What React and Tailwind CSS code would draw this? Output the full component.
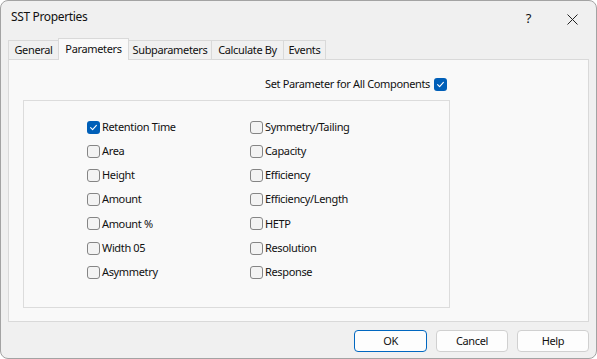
import React from "react";

const leftItems = [
  { label: "Retention Time", checked: true },
  { label: "Area" },
  { label: "Height" },
  { label: "Amount" },
  { label: "Amount %" },
  { label: "Width 05" },
  { label: "Asymmetry" },
];

const rightItems = [
  { label: "Symmetry/Tailing" },
  { label: "Capacity" },
  { label: "Efficiency" },
  { label: "Efficiency/Length" },
  { label: "HETP" },
  { label: "Resolution" },
  { label: "Response" },
];

const tabs = [
  { name: "General", w: "w-[51px]" },
  { name: "Parameters", w: "w-[71px]" },
  { name: "Subparameters", w: "w-[84px]" },
  { name: "Calculate By", w: "w-[73px]" },
  { name: "Events", w: "w-[43px]" },
];

function Checkbox({ checked }) {
  if (checked) {
    return (
      <span className="flex h-[13px] w-[13px] shrink-0 items-center justify-center rounded-[3px] bg-[#005fb8]">
        <svg width="9" height="9" viewBox="0 0 9 9" fill="none">
          <path d="M1.6 4.7 L3.6 6.6 L7.4 2.4" stroke="white" strokeWidth="1.1" strokeLinecap="round" strokeLinejoin="round" />
        </svg>
      </span>
    );
  }
  return <span className="h-[13px] w-[13px] shrink-0 rounded-[3px] border border-[#858585] bg-[#f3f3f3]" />;
}

function CheckItem({ label, checked }) {
  return (
    <div className="flex h-[24.2px] items-center gap-[2px]">
      <Checkbox checked={checked} />
      <span>{label}</span>
    </div>
  );
}

export default function App() {
  return (
    <div
      className="flex h-[359px] w-[597px] flex-col overflow-hidden rounded-[8px] border border-[#a3a3a3] bg-[#f0f0f0] text-[11px] tracking-[-0.35px] text-[#111]"
      style={{ fontFamily: '"Noto Sans", "Open Sans", sans-serif' }}
    >
      {/* title bar */}
      <div className="flex h-[36px] shrink-0 items-start justify-between pl-[10px] pr-[18px] pt-[7px]">
        <span className="text-[12px]">SST Properties</span>
        <div className="flex items-center gap-[36px] pt-[1px]">
          <span className="text-[13px]">?</span>
          <svg width="11" height="11" viewBox="0 0 11 11" className="mt-[1px]">
            <path d="M0.5 0.5 L10.5 10.5 M10.5 0.5 L0.5 10.5" stroke="#222" strokeWidth="1" />
          </svg>
        </div>
      </div>

      {/* tabs */}
      <div className="flex h-[22px] shrink-0 items-end pl-[7px]">
        {tabs.map((t) =>
          t.name === "Parameters" ? (
            <div
              key={t.name}
              className={`relative z-10 -mb-px -ml-px flex h-[22px] items-start justify-center border border-b-0 border-[#d9d9d9] bg-[#f9f9f9] pt-[2px] ${t.w}`}
            >
              {t.name}
            </div>
          ) : (
            <div
              key={t.name}
              className={`-ml-px flex h-[19px] items-center justify-center border border-b-0 border-[#d9d9d9] bg-[#f0f0f0] first:ml-0 ${t.w}`}
            >
              {t.name}
            </div>
          )
        )}
      </div>

      {/* panel */}
      <div className="ml-[7px] mr-[7px] flex h-[263px] shrink-0 flex-col border border-[#d9d9d9] bg-[#f9f9f9]">
        <div className="flex h-[40px] items-center justify-end gap-[4px] pr-[141px] pt-[8px]">
          <span>Set Parameter for All Components</span>
          <Checkbox checked />
        </div>
        <div className="ml-[14px] flex h-[208px] w-[427px] border border-[#dcdcdc] pl-[63px] pt-[14px]">
          <div className="w-[163px]">
            {leftItems.map((it) => (
              <CheckItem key={it.label} {...it} />
            ))}
          </div>
          <div>
            {rightItems.map((it) => (
              <CheckItem key={it.label} {...it} />
            ))}
          </div>
        </div>
      </div>

      {/* buttons */}
      <div className="flex flex-1 items-start justify-end gap-[9px] pr-[7px] pt-[8px]">
        <button className="h-[22px] w-[73px] rounded-[4px] border border-[#0067c0] bg-[#fdfdfd]">OK</button>
        <button className="h-[22px] w-[72px] rounded-[4px] border border-[#d0d0d0] bg-[#fdfdfd]">Cancel</button>
        <button className="h-[22px] w-[72px] rounded-[4px] border border-[#d0d0d0] bg-[#fdfdfd]">Help</button>
      </div>
    </div>
  );
}
